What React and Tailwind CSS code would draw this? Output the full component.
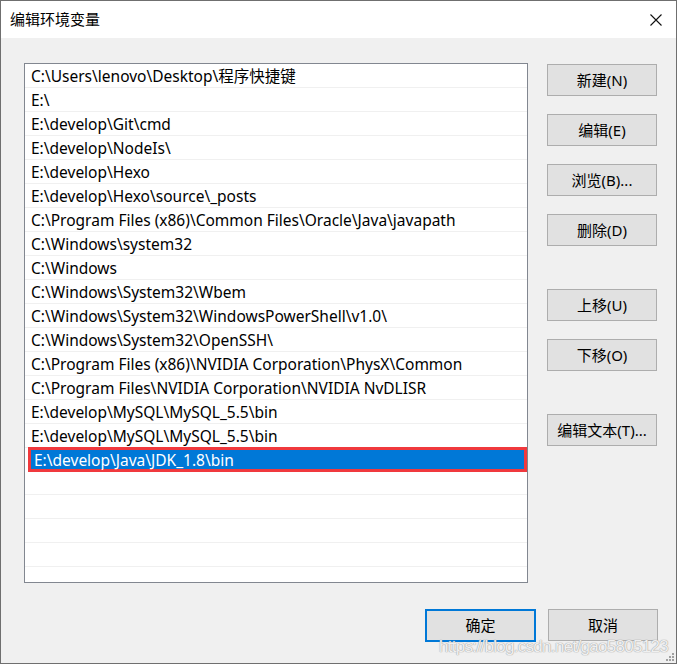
import React from 'react';

const paths = [
  'C:\\Users\\lenovo\\Desktop\\程序快捷键',
  'E:\\',
  'E:\\develop\\Git\\cmd',
  'E:\\develop\\NodeIs\\',
  'E:\\develop\\Hexo',
  'E:\\develop\\Hexo\\source\\_posts',
  'C:\\Program Files (x86)\\Common Files\\Oracle\\Java\\javapath',
  'C:\\Windows\\system32',
  'C:\\Windows',
  'C:\\Windows\\System32\\Wbem',
  'C:\\Windows\\System32\\WindowsPowerShell\\v1.0\\',
  'C:\\Windows\\System32\\OpenSSH\\',
  'C:\\Program Files (x86)\\NVIDIA Corporation\\PhysX\\Common',
  'C:\\Program Files\\NVIDIA Corporation\\NVIDIA NvDLISR',
  'E:\\develop\\MySQL\\MySQL_5.5\\bin',
  'E:\\develop\\MySQL\\MySQL_5.5\\bin',
  'E:\\develop\\Java\\JDK_1.8\\bin',
];

const SELECTED = 16;
const EMPTY_ROWS = 4;

const font = "font-['Noto_Sans','Noto_Sans_CJK_SC',sans-serif]";

// 普通按钮（Win10 风格）
const Btn = ({ children, className = '', primary }) => (
  <button
    className={`w-[110px] h-[32px] bg-[#e1e1e1] text-[15px] text-black leading-none ${
      primary ? 'border-2 border-[#0078d7]' : 'border border-[#adadad]'
    } ${className}`}
  >
    {children}
  </button>
);

export default function App() {
  return (
    <div className={`relative w-[677px] h-[664px] border border-[#6f6f6f] bg-[#f0f0f0] flex flex-col ${font}`}>
      {/* 标题栏 */}
      <div className="h-[37px] bg-white flex items-center justify-between pl-[9px] pr-[14px] shrink-0">
        <span className="text-[15px] text-black">编辑环境变量</span>
        <svg width="12" height="12" viewBox="0 0 12 12">
          <path d="M0.5 0.5 L11.5 11.5 M11.5 0.5 L0.5 11.5" stroke="#111" strokeWidth="1.1" />
        </svg>
      </div>

      {/* 内容 */}
      <div className="flex pl-[23px] pt-[25px]">
        <div className="w-[504px] h-[520px] bg-white border border-[#828790] overflow-hidden shrink-0">
          {paths.map((p, i) =>
            i === SELECTED ? (
              <div key={i} className="h-[24px] pl-[3px]">
                <div className="h-[25px] -mt-px border-[3px] border-[#f0393d] bg-[#0078d7] text-white text-[15.5px] leading-[21px] pl-[3px] whitespace-nowrap">
                  {p}
                </div>
              </div>
            ) : (
              <div
                key={i}
                className="h-[24px] border-b border-[#f0f0f0] pl-[6px] text-[15.5px] leading-[25px] text-black whitespace-nowrap"
              >
                {p}
              </div>
            )
          )}
          {Array.from({ length: EMPTY_ROWS }).map((_, i) => (
            <div key={'e' + i} className="h-[24px] border-b border-[#f0f0f0]" />
          ))}
        </div>

        <div className="flex flex-col ml-[19px] pt-px">
          <Btn>新建(N)</Btn>
          <Btn className="mt-[18px]">编辑(E)</Btn>
          <Btn className="mt-[18px]">浏览(B)...</Btn>
          <Btn className="mt-[18px]">删除(D)</Btn>
          <Btn className="mt-[43px]">上移(U)</Btn>
          <Btn className="mt-[18px]">下移(O)</Btn>
          <Btn className="mt-[43px]">编辑文本(T)...</Btn>
        </div>
      </div>

      <div className="flex justify-end gap-[12px] pr-[18px] mt-[26px]">
        <Btn primary className="w-[111px] h-[33px]">确定</Btn>
        <Btn>取消</Btn>
      </div>

      {/* 水印 */}
      <div className="absolute right-[8px] bottom-[8px] font-['Liberation_Sans',sans-serif] text-[17px] tracking-[-0.7px] leading-none text-white/85 [text-shadow:0_0_1px_#9a9a9a,0_0_1px_#9a9a9a]">
        https://blog.csdn.net/gao5805123
      </div>

      {/* 缩放手柄 */}
      <svg className="absolute right-[1px] bottom-[1px]" width="10" height="10" viewBox="0 0 10 10">
        <rect x="7" y="1" width="2" height="2" fill="#a0a0a0" />
        <rect x="4" y="4" width="2" height="2" fill="#a0a0a0" />
        <rect x="7" y="4" width="2" height="2" fill="#a0a0a0" />
        <rect x="1" y="7" width="2" height="2" fill="#a0a0a0" />
        <rect x="4" y="7" width="2" height="2" fill="#a0a0a0" />
        <rect x="7" y="7" width="2" height="2" fill="#a0a0a0" />
      </svg>
    </div>
  );
}
